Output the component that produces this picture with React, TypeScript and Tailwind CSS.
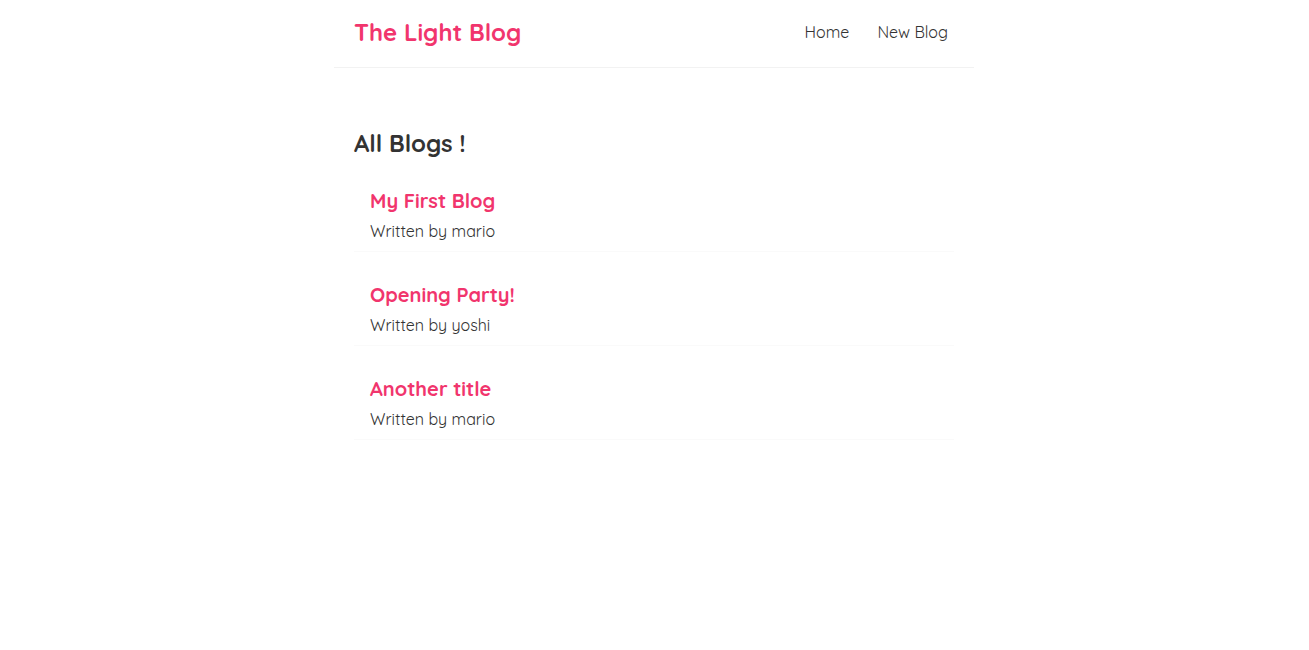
const blogs = [
  { id: 1, title: 'My First Blog', author: 'mario' },
  { id: 2, title: 'Opening Party!', author: 'yoshi' },
  { id: 3, title: 'Another title', author: 'mario' },
];

const Navbar = () => (
  <nav className="mx-auto flex h-[68px] max-w-[640px] items-center border-b border-[#f2f2f2] px-5 pb-1">
    <h1 className="text-[24px] leading-[30px] font-bold text-[#f1356d]">The Light Blog</h1>
    <div className="ml-auto flex">
      <a href="#" className="ml-4 p-[6px] text-[16px] leading-5 text-[#333]">Home</a>
      <a href="#" className="ml-4 p-[6px] text-[16px] leading-5 text-[#333]">New Blog</a>
    </div>
  </nav>
);

const BlogList = () => (
  <div>
    {blogs.map((blog) => (
      <div key={blog.id} className="mt-5 border-b border-[#fafafa] px-4 py-[10px]">
        <h2 className="mb-2 text-[20px] leading-[25px] font-bold text-[#f1356d]">{blog.title}</h2>
        <p className="text-[16px] leading-5 text-[#333]">Written by {blog.author}</p>
      </div>
    ))}
  </div>
);

export default function App() {
  return (
    <div className="min-h-screen bg-white pr-px text-[#333] font-['Quicksand','Lato','Noto_Sans',sans-serif]">
      <Navbar />
      <div className="mx-auto mt-10 max-w-[640px] p-5">
        <h2 className="text-[24px] leading-[30px] font-bold text-[#333]">All Blogs !</h2>
        <BlogList />
      </div>
    </div>
  );
}
